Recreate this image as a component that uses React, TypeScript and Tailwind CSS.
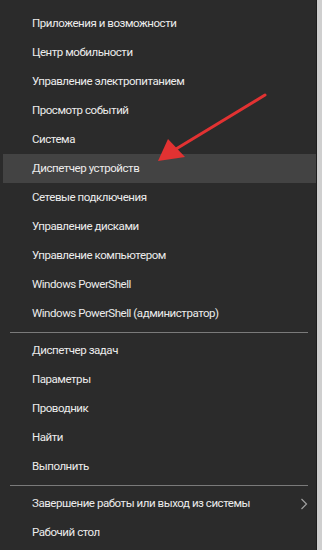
import React from "react";

const group1 = [
  "Приложения и возможности",
  "Центр мобильности",
  "Управление электропитанием",
  "Просмотр событий",
  "Система",
  "Диспетчер устройств",
  "Сетевые подключения",
  "Управление дисками",
  "Управление компьютером",
  "Windows PowerShell",
  "Windows PowerShell (администратор)",
];
const group2 = ["Диспетчер задач", "Параметры", "Проводник", "Найти", "Выполнить"];

function Row({ label, active, chevron }: { label: string; active?: boolean; chevron?: boolean }) {
  return (
    <div
      className={`h-[29px] flex items-center pl-[29px] pr-[8px] ml-[3px] ${active ? "bg-[#434343]" : ""}`}
    >
      <span className="flex-1 text-[11.5px] tracking-[-0.45px] text-[#ececec] leading-none">{label}</span>
      {chevron && (
        <svg width="8" height="12" viewBox="0 0 8 12">
          <path d="M1.5 1 L6.5 6 L1.5 11" fill="none" stroke="#a0a0a0" strokeWidth="1.2" />
        </svg>
      )}
    </div>
  );
}

function Sep() {
  return (
    <div className="h-[8px] flex items-center pl-[10px] pr-[8px]">
      <div className="h-px w-full bg-[#7a7a7a]" />
    </div>
  );
}

export default function App() {
  return (
    <div
      className="w-[322px] h-[550px] bg-[#cfcfcf] flex relative overflow-hidden"
      style={{ fontFamily: 'Roboto, "Liberation Sans", sans-serif' }}
    >
      <div className="w-[317px] h-full bg-[#2b2b2b] border-r border-[#1e1e1e] pt-[9px]">
        {group1.map((l, i) => (
          <Row key={l} label={l} active={i === 5} />
        ))}
        <Sep />
        {group2.map((l) => (
          <Row key={l} label={l} />
        ))}
        <Sep />
        <Row label="Завершение работы или выход из системы" chevron />
        <Row label="Рабочий стол" />
      </div>
      <svg className="absolute left-0 top-0" width="322" height="550" viewBox="0 0 322 550">
        <line x1="265" y1="95" x2="176" y2="149" stroke="#e23232" strokeWidth="3" strokeLinecap="round" />
        <polygon points="158,161 168,139 185,157" fill="#e23232" />
      </svg>
    </div>
  );
}
